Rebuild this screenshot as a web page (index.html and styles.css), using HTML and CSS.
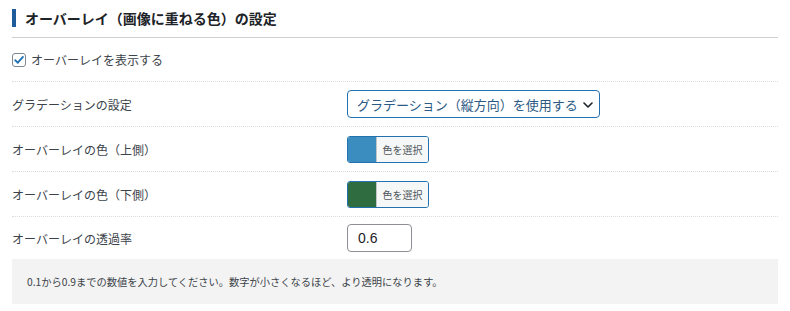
FILE: index.html
```html
<!DOCTYPE html>
<html lang="ja">
<head>
<meta charset="utf-8">
<link rel="stylesheet" href="styles.css">
</head>
<body>
<div class="panel">
  <h2 class="title">オーバーレイ（画像に重ねる色）の設定</h2>
  <label class="check-row">
    <span class="checkbox"><svg viewBox="0 0 14 14" width="12" height="12"><path d="M2.5 7.2 L5.6 10.2 L11.6 3.4" fill="none" stroke="#2271b1" stroke-width="2.2" stroke-linecap="round" stroke-linejoin="round"/></svg></span>
    <span>オーバーレイを表示する</span>
  </label>
  <div class="row">
    <div class="label">グラデーションの設定</div>
    <div class="field">
      <div class="select">グラデーション（縦方向）を使用する<svg class="chev" viewBox="0 0 10 6" width="10" height="6"><path d="M1 1 L5 5 L9 1" fill="none" stroke="#1d2327" stroke-width="1.6" stroke-linecap="round" stroke-linejoin="round"/></svg></div>
    </div>
  </div>
  <div class="row">
    <div class="label">オーバーレイの色（上側）</div>
    <div class="field">
      <div class="color-btn"><span class="swatch swatch-blue"></span><span class="color-text">色を選択</span></div>
    </div>
  </div>
  <div class="row">
    <div class="label">オーバーレイの色（下側）</div>
    <div class="field">
      <div class="color-btn"><span class="swatch swatch-green"></span><span class="color-text">色を選択</span></div>
    </div>
  </div>
  <div class="row row-last">
    <div class="label">オーバーレイの透過率</div>
    <div class="field">
      <div class="input">0.6</div>
    </div>
  </div>
  <div class="help">0.1から0.9までの数値を入力してください。数字が小さくなるほど、より透明になります。</div>
</div>
</body>
</html>
```

FILE: styles.css
```css
* { box-sizing: border-box; }
html, body { margin: 0; padding: 0; background: #fff; }
body {
  font-family: "Noto Sans CJK JP", "Noto Sans", sans-serif;
  color: #3c434a;
}
.panel {
  width: 790px;
  padding: 0 12px;
}
.title {
  margin: 0;
  height: 38px;
  display: flex;
  align-items: center;
  gap: 9px;
  font-size: 14px;
  font-weight: bold;
  color: #1d2327;
  border-bottom: 1px solid #d0d0d0;
  padding-bottom: 1px;
}
.title::before {
  content: "";
  width: 4px;
  height: 18px;
  background: #1f5c9c;
}
.check-row {
  display: flex;
  align-items: center;
  gap: 5px;
  height: 44px;
  font-size: 12px;
  color: #3c434a;
  border-bottom: 1px dotted #dcdcde;
}
.checkbox {
  width: 14px;
  height: 14px;
  border: 1px solid #7e8993;
  border-radius: 3px;
  display: flex;
  align-items: center;
  justify-content: center;
}
.row {
  display: flex;
  align-items: center;
  height: 45px;
  border-bottom: 1px dotted #dcdcde;
}
.row-last {
  border-bottom: none;
  height: 42px;
}
.label {
  width: 335px;
  font-size: 12px;
  color: #3c434a;
}
.field { display: flex; align-items: center; }
.select {
  width: 253px;
  height: 28px;
  border: 1px solid #2271b1;
  border-radius: 4px;
  display: flex;
  align-items: center;
  padding: 0 0 0 9px;
  font-size: 13px;
  color: #2c5a85;
  gap: 5px;
}
.chev { margin-top: 1px; }
.color-btn {
  display: flex;
  width: 82px;
  height: 27px;
  border: 1px solid #2271b1;
  border-radius: 3px;
  overflow: hidden;
}
.swatch { width: 28px; height: 100%; }
.swatch-blue { background: #3b8dbf; }
.swatch-green { background: #2f6d40; }
.color-text {
  flex: 1;
  background: #f6f7f7;
  border-left: 1px solid #c3c4c7;
  display: flex;
  align-items: center;
  justify-content: center;
  font-size: 10px;
  color: #50575e;
}
.input {
  width: 65px;
  height: 28px;
  border: 1px solid #8c8f94;
  border-radius: 4px;
  display: flex;
  align-items: center;
  padding-left: 10px;
  font-family: "Liberation Sans", Arial, sans-serif;
  font-size: 14px;
  color: #1d2327;
}
.help {
  height: 45px;
  background: #f3f3f3;
  display: flex;
  align-items: center;
  padding-left: 15px;
  font-size: 10.25px;
  color: #3c434a;
}
```
